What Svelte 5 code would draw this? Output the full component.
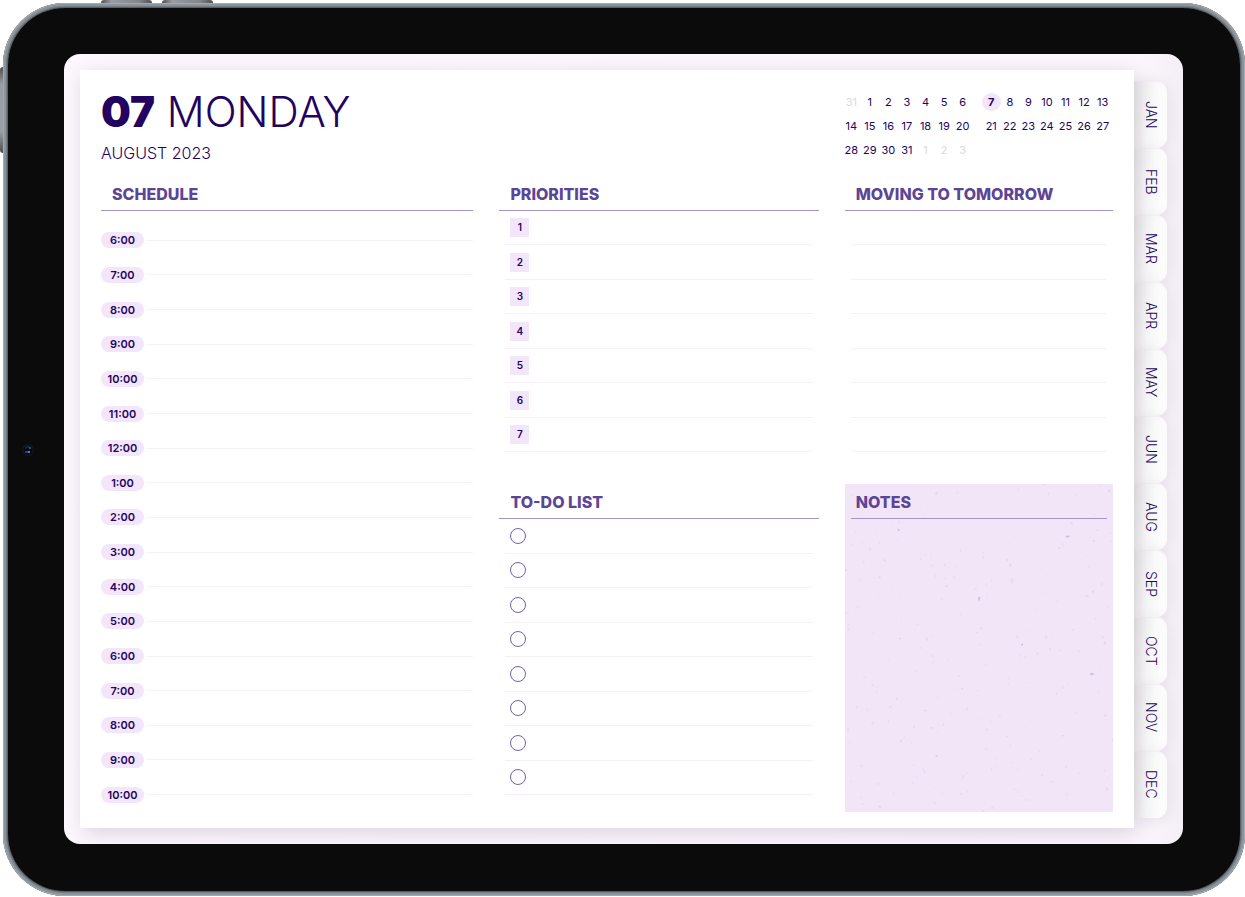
<script>
  const months = ['JAN', 'FEB', 'MAR', 'APR', 'MAY', 'JUN', 'AUG', 'SEP', 'OCT', 'NOV', 'DEC'];
  const hours = [6, 7, 8, 9, 10, 11, 12, 1, 2, 3, 4, 5, 6, 7, 8, 9, 10];
  const priorities = [1, 2, 3, 4, 5, 6, 7];
  const tasks = [1, 2, 3, 4, 5, 6, 7, 8];

  const day = (n, kind = '') => ({ n, kind });
  const run = (from, to, kind = '') =>
    Array.from({ length: to - from + 1 }, (_, i) => day(from + i, kind));

  const weeks = [
    [[day(31, 'faded'), ...run(1, 6)], [day(7, 'current'), ...run(8, 13)]],
    [run(14, 20), run(21, 27)],
    [[...run(28, 31), ...run(1, 3, 'faded')], Array.from({ length: 7 }, () => day(''))]
  ];

  // Paper fibres scattered over the notes card, from a fixed seed.
  let seed = 41;
  const rand = () => (seed = (seed * 16807) % 2147483647) / 2147483647;
  const specks = Array.from({ length: 260 }, () => ({
    x: rand() * 100,
    y: rand() * 100,
    rx: 0.4 + rand() * 1.1,
    ry: 0.4 + rand() * 1.1,
    o: 0.05 + rand() * 0.13
  }));
  const knots = [
    { x: 83, y: 16, rx: 2, ry: 1 },
    { x: 20, y: 14, rx: 1, ry: 1 },
    { x: 50, y: 35, rx: 1, ry: 2 },
    { x: 66, y: 49, rx: 1, ry: 1 },
    { x: 92, y: 58, rx: 2, ry: 1 }
  ];
</script>

<div class="stage">
  <span class="key key-one"></span>
  <span class="key key-two"></span>
  <span class="key key-side"></span>
  <div class="tablet">
    <div class="bezel">
      <svg class="camera" viewBox="0 0 14 14" aria-hidden="true">
        <circle cx="7" cy="7" r="6.5" fill="#10131a" />
        <circle cx="7" cy="7" r="4.500" fill="#050811" />
        <path d="M4 5.5 Q6 3 9 4" stroke="#14244f" stroke-width="2" fill="none" />
        <rect x="8" y="4" width="2" height="2" fill="#2c5670" />
        <rect x="4" y="8" width="3" height="2" fill="#2c3795" />
        <rect x="7" y="8" width="2" height="2" fill="#5e83ad" />
      </svg>
      <div class="screen">
        <main class="page">
          <header>
            <div>
              <h1><b>07</b> MONDAY</h1>
              <p class="month">AUGUST 2023</p>
            </div>
            <table class="calendar">
              <tbody>
                {#each weeks as [first, second]}
                  <tr>
                    {#each first as d}<td class={d.kind}><span>{d.n}</span></td>{/each}
                    <td class="spacer"></td>
                    {#each second as d}<td class={d.kind}><span>{d.n}</span></td>{/each}
                  </tr>
                {/each}
              </tbody>
            </table>
          </header>

          <div class="columns">
            <section class="column">
              <h2>SCHEDULE</h2>
              <ul class="hours">
                {#each hours as h}
                  <li><time>{h}:00</time></li>
                {/each}
              </ul>
            </section>

            <div class="column">
              <section class="upper">
                <h2>PRIORITIES</h2>
                <ul class="lines">
                  {#each priorities as p}
                    <li><span class="rank">{p}</span></li>
                  {/each}
                </ul>
              </section>
              <section class="lower">
                <h2>TO-DO LIST</h2>
                <ul class="lines">
                  {#each tasks as t}
                    <li><input type="checkbox" aria-label={`To-do ${t}`} /></li>
                  {/each}
                </ul>
              </section>
            </div>

            <div class="column">
              <section class="upper">
                <h2>MOVING TO TOMORROW</h2>
                <ul class="lines">
                  {#each priorities as p}
                    <li></li>
                  {/each}
                </ul>
              </section>
              <section class="lower notes">
                <svg class="paper" aria-hidden="true">
                  {#each specks as s}
                    <ellipse cx="{s.x}%" cy="{s.y}%" rx={s.rx} ry={s.ry} fill="#a58fc0" opacity={s.o} />
                  {/each}
                  {#each knots as k}
                    <ellipse cx="{k.x}%" cy="{k.y}%" rx={k.rx} ry={k.ry} fill="#a892cd" opacity="0.5" />
                  {/each}
                </svg>
                <h2>NOTES</h2>
              </section>
            </div>
          </div>
        </main>

        <nav class="tabs" aria-label="Months">
          {#each months as m}
            <a href="#{m.toLowerCase()}">{m}</a>
          {/each}
        </nav>
      </div>
    </div>
  </div>
</div>

<style>
  :global(body) {
    margin: 0;
    background: #fff;
  }

  .stage,
  .stage * {
    box-sizing: border-box;
  }

  .stage {
    position: relative;
    display: flex;
    min-height: 100vh;
    padding: 3px 0 1px 3px;
    font-family: Inter, 'Liberation Sans', sans-serif;
    color: #220360;
  }

  .key {
    position: absolute;
    background: linear-gradient(90deg, #4c4f53, #989da4 20%, #80858b 75%, #4c4f53);
  }

  .key-one,
  .key-two {
    top: 0;
    width: 51px;
    height: 4px;
    border-radius: 3px 3px 0 0;
  }

  .key-one {
    left: 101px;
  }

  .key-two {
    left: 162px;
  }

  .key-side {
    top: 67px;
    left: 0;
    width: 4px;
    height: 86px;
    border-radius: 3px 0 0 3px;
    background: linear-gradient(#4c4f53, #989da4 20%, #9a9fa5 75%, #4c4f53);
  }

  .tablet {
    position: relative;
    display: flex;
    flex: 1;
    padding: 5px;
    border-radius: 62px;
    background: #7c858d;
    box-shadow: inset 0 0 0 1px #a6aaae, inset 0 0 0 3px #8b9398, inset 0 0 0 4px #747d85, inset 0 0 0 5px #56616b;
  }

  .bezel {
    position: relative;
    display: flex;
    flex: 1;
    padding: 46px 57px 47px 56px;
    border-radius: 57px;
    background: #0b0b0b;
  }

  .camera {
    position: absolute;
    top: calc(50% - 7px);
    left: 13px;
    width: 14px;
    height: 14px;
  }

  .screen {
    display: flex;
    flex: 1;
    padding: 16px;
    border-radius: 16px;
    background: linear-gradient(90deg, #fdf8fe, #fcf6fd 96%, #f4eff6);
    overflow: hidden;
  }

  .page {
    position: relative;
    z-index: 1;
    display: flex;
    flex: 1;
    flex-direction: column;
    padding: 20px 21px 16px;
    background: #fff;
    box-shadow: 3px 5px 20px rgba(50, 25, 65, 0.17);
  }

  header {
    display: flex;
    justify-content: space-between;
    height: 86px;
  }

  h1 {
    margin: 0;
    font-size: 42px;
    font-weight: 300;
    line-height: 44px;
  }

  h1 b {
    font-weight: 900;
  }

  .month {
    margin: 8px 0 0;
    font-size: 16px;
    font-weight: 300;
    line-height: 22px;
  }

  .calendar {
    width: 270px;
    height: 72px;
    margin-right: 1px;
    border-collapse: collapse;
    table-layout: fixed;
    font-size: 11px;
    line-height: 18px;
  }

  .calendar td {
    height: 24px;
    padding: 0;
    text-align: center;
  }

  .calendar .spacer {
    width: 10px;
  }

  .calendar .faded {
    color: #dcd8e5;
  }

  .calendar .current span {
    display: block;
    border-radius: 9px;
    background: #f4e6fa;
    font-weight: 700;
  }

  .columns {
    display: grid;
    flex: 1;
    grid-template-columns: 372fr 319fr 268fr;
    gap: 26px;
  }

  .column {
    display: flex;
    flex-direction: column;
  }

  h2 {
    height: 35px;
    margin: 0;
    padding: 6px 10px 0 11px;
    border-bottom: 1px solid #a495c8;
    font-size: 16px;
    font-weight: 800;
    line-height: 24px;
    color: #5d4596;
    white-space: nowrap;
  }

  ul {
    display: flex;
    flex: 1;
    flex-direction: column;
    margin: 0;
    padding: 0;
    list-style: none;
  }

  .hours {
    padding-top: 12px;
  }

  .hours li {
    display: flex;
    flex: 1;
    gap: 3px;
    align-items: center;
  }

  .hours li::after {
    flex: 1;
    height: 1px;
    background: #f5f1fb;
    content: '';
  }

  time {
    width: 43px;
    border-radius: 8px;
    background: #f4e6fa;
    font-size: 11px;
    font-weight: 600;
    line-height: 16px;
    text-align: center;
  }

  .upper {
    display: flex;
    flex: 7 1 35px;
    flex-direction: column;
    margin-bottom: 32px;
  }

  .lower {
    display: flex;
    flex: 8 1 52px;
    flex-direction: column;
    padding-bottom: 17px;
  }

  .lines li {
    display: flex;
    flex: 1;
    align-items: center;
    margin: 0 6px;
    padding: 0 5px;
    border-bottom: 1px solid #f5eefb;
  }

  .rank {
    width: 19px;
    background: #f4e6fa;
    font-size: 10px;
    font-weight: 600;
    line-height: 19px;
    text-align: center;
  }

  input {
    width: 16px;
    height: 16px;
    margin: 0;
    border: 1px solid #7560ac;
    border-radius: 50%;
    background: #fff;
    appearance: none;
  }

  .notes {
    position: relative;
    background: #f2e5f8;
  }

  .notes h2 {
    position: relative;
    margin: 0 6px;
    padding: 6px 5px 0;
  }

  .paper {
    position: absolute;
    inset: 0;
    width: 100%;
    height: 100%;
  }

  .tabs {
    display: flex;
    flex-direction: column;
    width: 33px;
    padding: 11px 0 10px;
  }

  .tabs a {
    display: flex;
    flex: 1;
    align-items: center;
    justify-content: center;
    border-radius: 0 11px 11px 0;
    background: linear-gradient(100deg, #ececec, #fafafa 50%, #fdfdfd);
    box-shadow: 3px 2px 14px rgba(50, 30, 65, 0.08), inset 0 1px 0 #f2f0f3;
    font-size: 14px;
    font-weight: 300;
    line-height: 20px;
    color: #220360;
    text-decoration: none;
    writing-mode: vertical-rl;
  }
</style>
